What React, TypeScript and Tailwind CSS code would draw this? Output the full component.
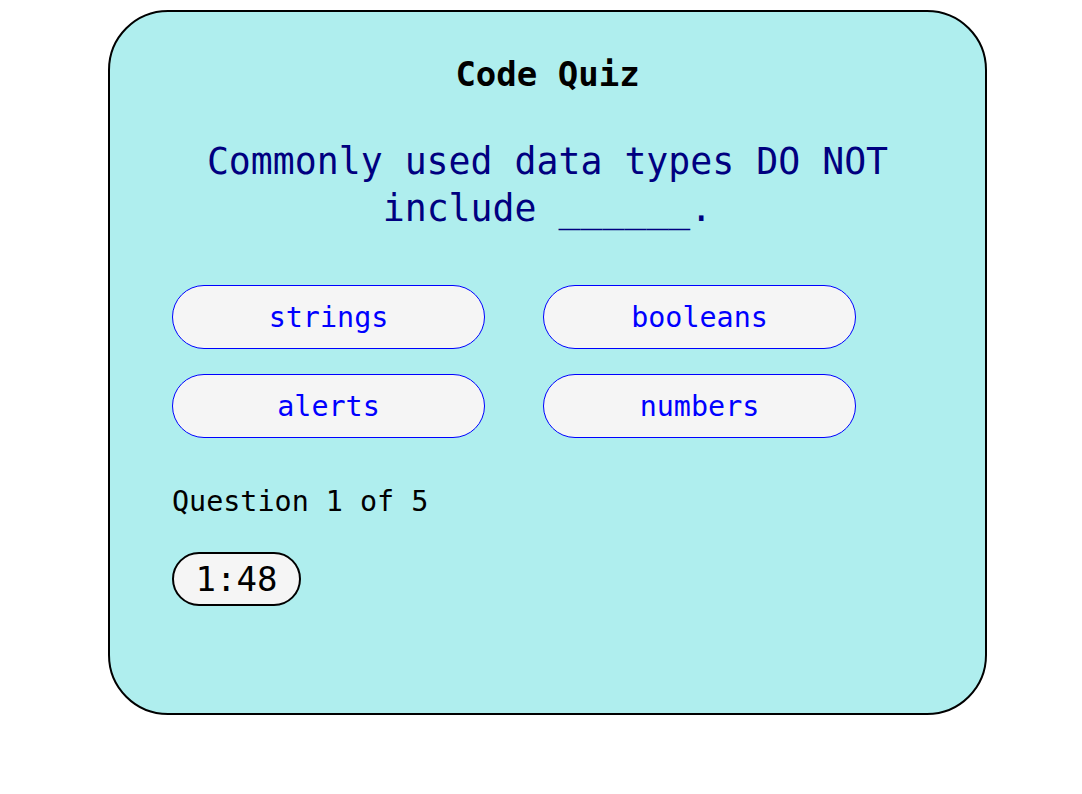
import React from "react";

const ANSWERS = ["strings", "booleans", "alerts", "numbers"];

export default function App() {
  return (
    <div className="min-h-[794px] bg-white pt-[10px] pl-[108px]" style={{ fontFamily: '"DejaVu Sans Mono", monospace' }}>
      <div className="w-[879px] h-[705px] rounded-[60px] border-2 border-black bg-[#afeeee] pt-[42px] pl-[62px] pr-[62px]">
        <h1 className="text-center text-[34px] leading-[40px] font-bold text-black">Code Quiz</h1>

        <p className="mt-[44px] text-center text-[36.5px] leading-[47px] text-[#000080]">
          Commonly used data types DO NOT include ______.
        </p>

        <div className="mt-[53px] grid grid-cols-[313px_313px] gap-x-[58px] gap-y-[25px]">
          {ANSWERS.map((a) => (
            <button
              key={a}
              className="h-[64px] rounded-full border border-[#0000ff] bg-[#f5f5f5] pt-[2px] text-[28.4px] text-[#0000ff]"
              style={{ fontFamily: '"DejaVu Sans Mono", monospace' }}
            >
              {a}
            </button>
          ))}
        </div>

        <p className="mt-[47px] text-[28.4px] leading-[34px] text-black">Question 1 of 5</p>

        <div className="mt-[33px] flex h-[54px] w-[129px] items-center justify-center rounded-full border-2 border-black bg-[#f5f5f5] text-[34px] text-black">
          1:48
        </div>
      </div>
    </div>
  );
}
